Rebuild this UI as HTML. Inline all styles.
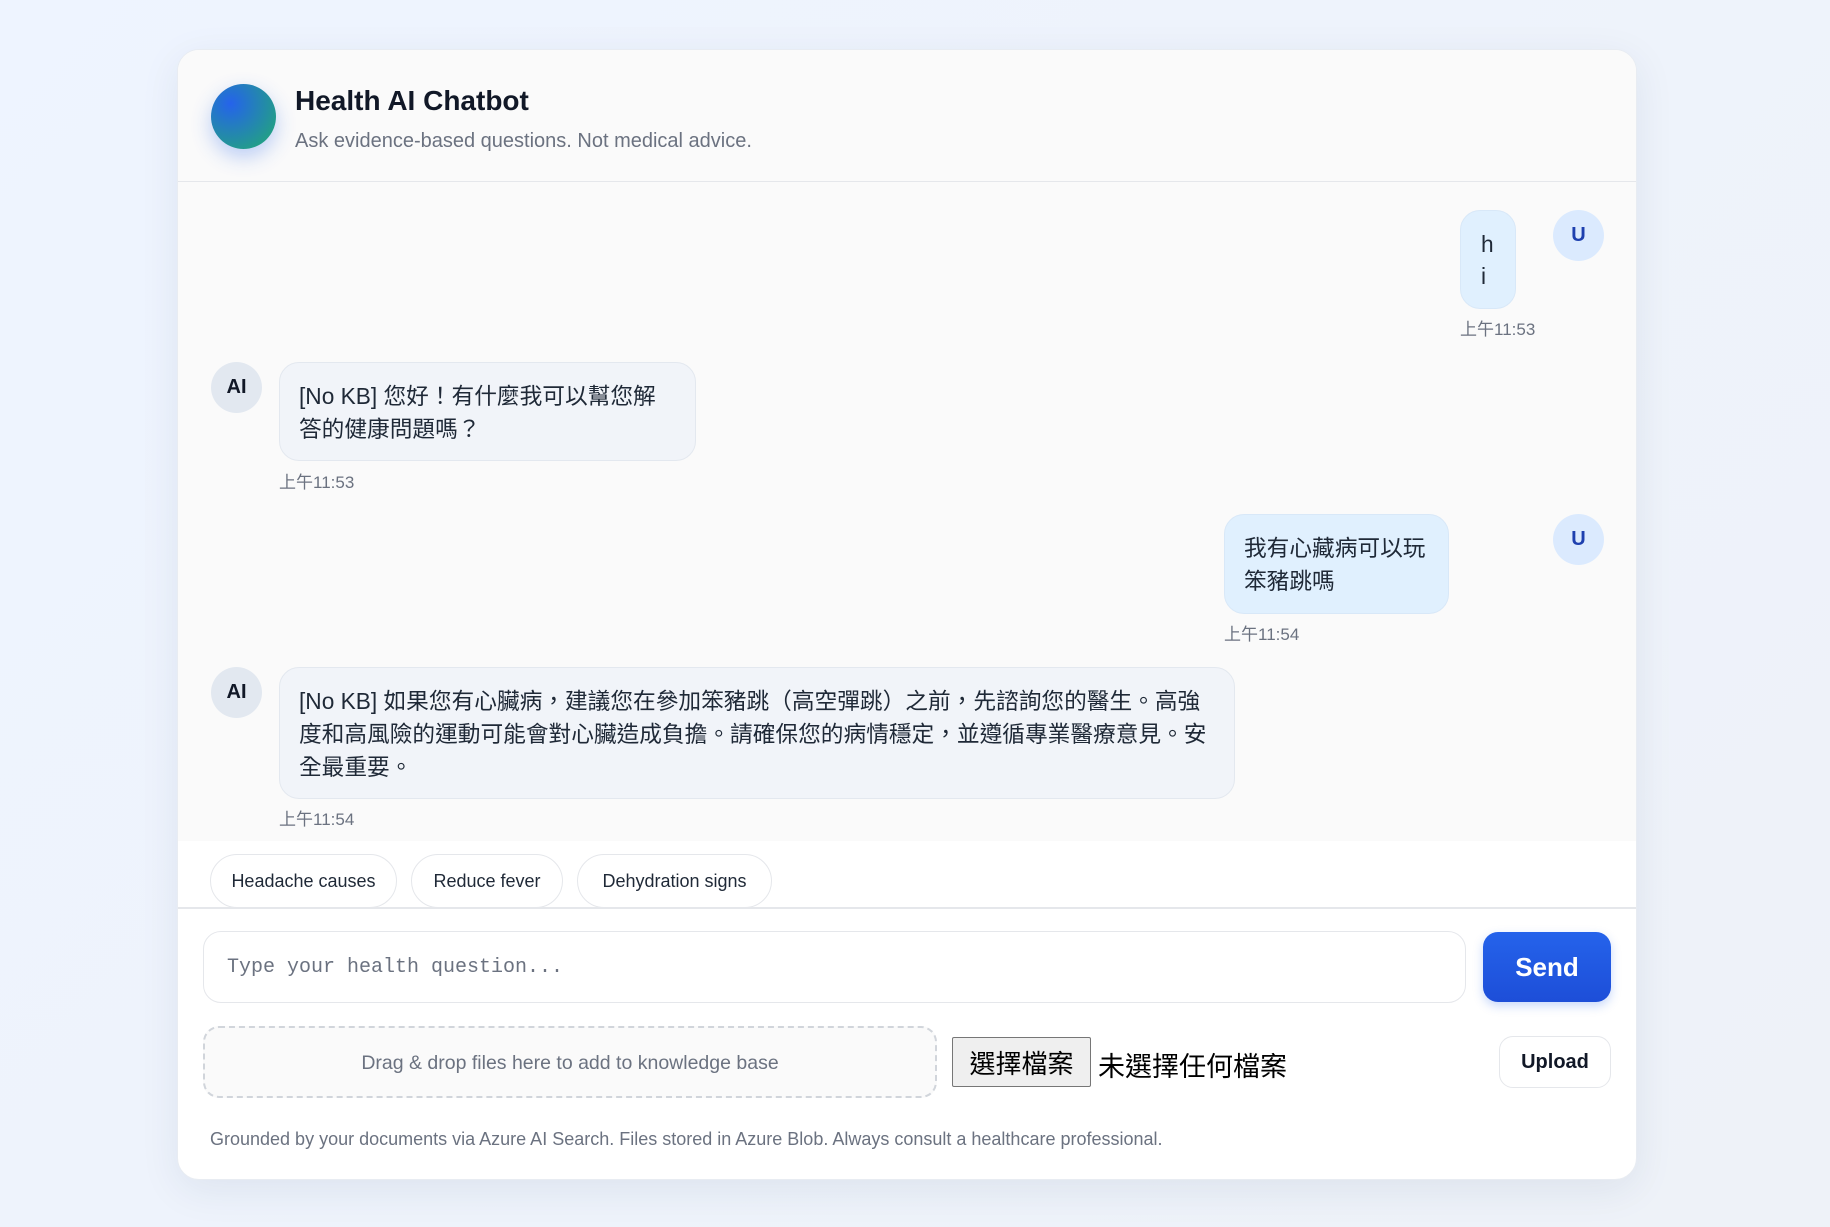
<!DOCTYPE html>
<html><head><meta charset="utf-8"><style>
*{box-sizing:border-box;margin:0;padding:0}
body{width:1830px;height:1227px;background:linear-gradient(135deg,#eef4ff,#eef2f8);font-family:"Liberation Sans","Noto Sans CJK TC",sans-serif;position:relative;overflow:hidden;color:#111827}
.card{position:absolute;left:177px;top:49px;width:1460px;height:1131px;background:#fff;border-radius:22px;box-shadow:0 10px 40px rgba(30,50,90,.08);border:1px solid #e8ecf2;overflow:hidden}
.a{position:absolute}
.hdr{left:0;top:0;width:1460px;height:132px;background:#fafafa;border-bottom:1.5px solid #e5e7eb}
.logo{left:33px;top:34px;width:65px;height:65px;border-radius:50%;background:radial-gradient(circle at 30% 30%,#2563eb,#22a67a 90%);box-shadow:0 8px 20px rgba(37,99,235,.3)}
.msgs{left:0;top:132px;width:1460px;height:659px;background:#fafafa}
.bub{position:absolute;border-radius:20px;font-size:22.7px;line-height:33px;padding:17px 19px;border:1px solid #e3e8ef;white-space:nowrap}
.ai{background:#f1f4f9;color:#1f2937}
.us{background:#e0f0fe;color:#1f2937;border-color:#d8e8f8}
.av{position:absolute;width:51px;height:51px;border-radius:50%;display:flex;align-items:center;justify-content:center;font-weight:bold;font-size:20px}
.av.ai2{background:#e2e8f0;color:#111827}
.av.u{background:#dbeafe;color:#1e40af}
.ts{position:absolute;font-size:17px;color:#6b7280}
.chip{position:absolute;top:854px;height:54px;border:1px solid #e5e7eb;border-radius:27px;font-size:18px;display:flex;align-items:center;justify-content:center;background:#fff;color:#1f2937}
</style></head><body>
<div class="card">
<div class="a hdr"></div>
<div class="a logo"></div>
<div class="a" style="left:117px;top:35px;font-size:28px;font-weight:bold;color:#111827">Health AI Chatbot</div>
<div class="a" style="left:117px;top:80px;font-size:20px;color:#6b7280">Ask evidence-based questions. Not medical advice.</div>
<div class="a msgs"></div>
<div class="bub us" style="left:1282px;top:160px;width:56px;height:99px;padding:17px 0 0 20px;line-height:32px">h<br>i</div>
<div class="av u" style="left:1375px;top:160px">U</div>
<div class="ts" style="left:1282px;top:265px">上午11:53</div>
<div class="av ai2" style="left:33px;top:312px">AI</div>
<div class="bub ai" style="left:101px;top:312px;width:417px;height:99px">[No KB] 您好！有什麼我可以幫您解<br>答的健康問題嗎？</div>
<div class="ts" style="left:101px;top:418px">上午11:53</div>
<div class="bub us" style="left:1046px;top:464px;width:225px;height:100px">我有心藏病可以玩<br>笨豬跳嗎</div>
<div class="av u" style="left:1375px;top:464px">U</div>
<div class="ts" style="left:1046px;top:570px">上午11:54</div>
<div class="av ai2" style="left:33px;top:617px">AI</div>
<div class="bub ai" style="left:101px;top:617px;width:956px;height:132px">[No KB] 如果您有心臟病，建議您在參加笨豬跳（高空彈跳）之前，先諮詢您的醫生。高強<br>度和高風險的運動可能會對心臟造成負擔。請確保您的病情穩定，並遵循專業醫療意見。安<br>全最重要。</div>
<div class="ts" style="left:101px;top:755px">上午11:54</div>
</div>
<div class="a" style="left:178px;top:907px;width:1458px;height:1.5px;background:#e5e7eb"></div>
<div class="chip" style="left:210px;width:187px">Headache causes</div>
<div class="chip" style="left:411px;width:152px">Reduce fever</div>
<div class="chip" style="left:577px;width:195px">Dehydration signs</div>
<div class="a" style="left:203px;top:931px;width:1263px;height:72px;border:1.5px solid #e5e7eb;border-radius:18px;background:#fff;font-family:'Liberation Mono',monospace;font-size:20px;color:#6b7280;padding:24px 0 0 23px">Type your health question...</div>
<div class="a" style="left:1483px;top:932px;width:128px;height:70px;border-radius:15px;background:linear-gradient(#2563eb,#1d4ed8);color:#fff;font-weight:bold;font-size:26px;display:flex;align-items:center;justify-content:center;box-shadow:0 4px 10px rgba(37,99,235,.25)">Send</div>
<div class="a" style="left:203px;top:1026px;width:734px;height:72px;border:2.5px dashed #d1d5db;border-radius:16px;background:#fafafa;font-size:19.5px;color:#6b7280;display:flex;align-items:center;justify-content:center;padding-top:3px">Drag &amp; drop files here to add to knowledge base</div>
<div class="a" style="left:952px;top:1037px;width:139px;height:50px;border:1px solid #767676;background:#efefef;border-radius:2px;font-size:26px;display:flex;align-items:center;justify-content:center;color:#000">選擇檔案</div>
<div class="a" style="left:1098px;top:1045px;font-size:27px;color:#000">未選擇任何檔案</div>
<div class="a" style="left:1499px;top:1036px;width:112px;height:52px;border:1px solid #e5e7eb;border-radius:14px;background:#fff;font-weight:bold;font-size:20px;display:flex;align-items:center;justify-content:center">Upload</div>
<div class="a" style="left:210px;top:1129px;font-size:18px;color:#6b7280">Grounded by your documents via Azure AI Search. Files stored in Azure Blob. Always consult a healthcare professional.</div>
</body></html>
